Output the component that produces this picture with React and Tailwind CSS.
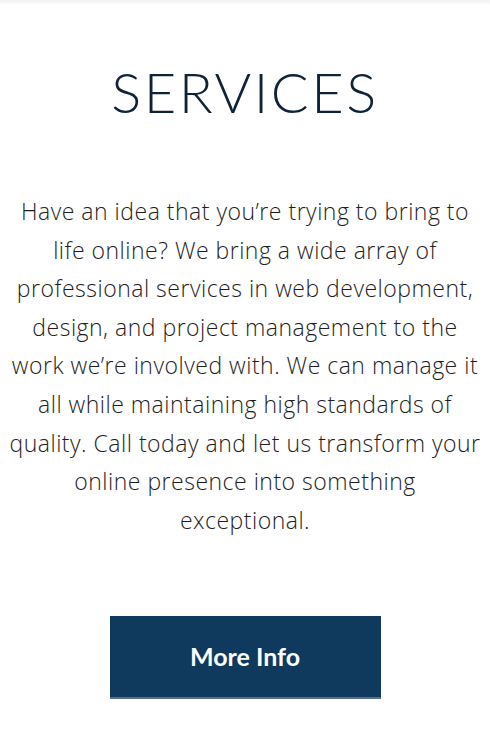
export default function App() {
  const lines = [
    "Have an idea that you’re trying to bring to",
    "life online? We bring a wide array of",
    "professional services in web development,",
    "design, and project management to the",
    "work we’re involved with. We can manage it",
    "all while maintaining high standards of",
    "quality. Call today and let us transform your",
    "online presence into something",
    "exceptional.",
  ];

  return (
    <div className="min-h-[745px] bg-white font-['Lato',sans-serif]">
      {/* top shadow strip */}
      <div className="h-[4px] bg-gradient-to-b from-[#f2f2f2] to-[#fafafa]" />

      <h1 className="mt-[56px] text-center text-[56px] leading-[64px] font-light tracking-[2.5px] text-[#0d2338]">
        SERVICES
      </h1>

      <p className="mt-[68px] text-center font-['Open_Sans',sans-serif] text-[23px] font-light tracking-[0.5px] leading-[38.6px] text-[#1e1e1e]">
        {lines.map((l, i) => (
          <span key={i} className="block whitespace-nowrap">
            {l}
          </span>
        ))}
      </p>

      <div className="mt-[77px] flex justify-center">
        <button className="h-[83px] w-[271px] bg-[#0f3a5e] border-b-2 border-[#5a6f82] text-[25px] font-bold text-white">
          More Info
        </button>
      </div>
    </div>
  );
}
